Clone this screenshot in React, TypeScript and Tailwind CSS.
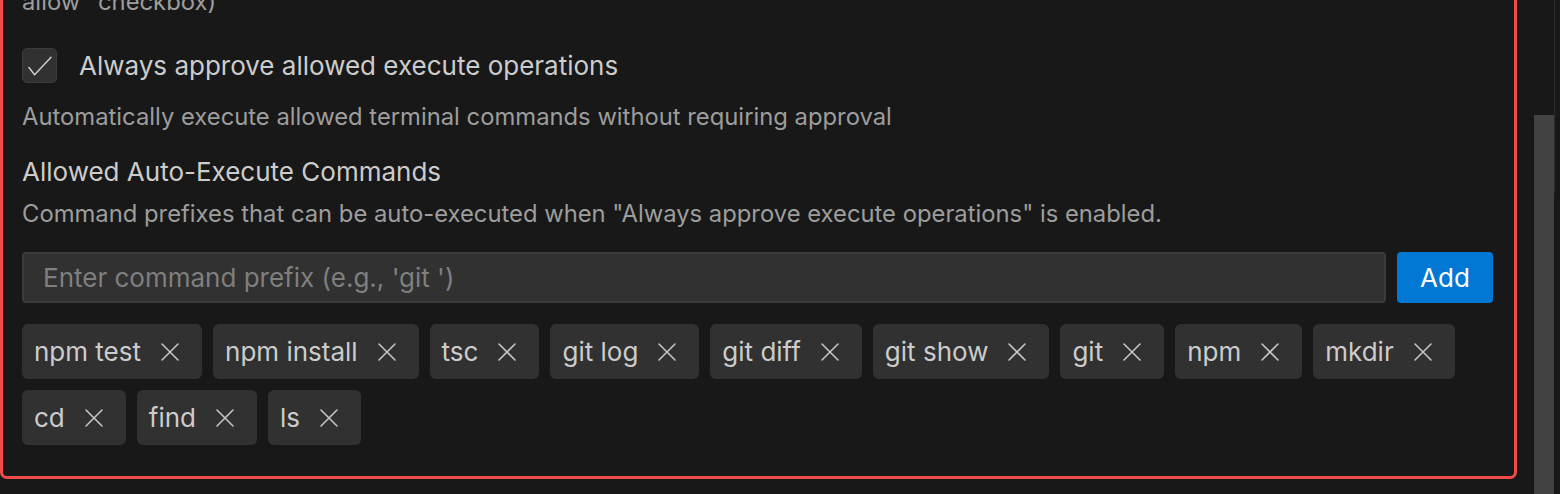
const commands = [
  "npm test",
  "npm install",
  "tsc",
  "git log",
  "git diff",
  "git show",
  "git",
  "npm",
  "mkdir",
  "cd",
  "find",
  "ls",
];

function CloseIcon() {
  return (
    <svg width="32" height="32" viewBox="0 0 32 32" fill="none" className="shrink-0">
      <path d="M8 8L24 24M24 8L8 24" stroke="#c5c5c5" strokeWidth="1.6" strokeLinecap="round" />
    </svg>
  );
}

function CheckIcon() {
  return (
    <svg width="35" height="35" viewBox="0 0 35 35" fill="none">
      <path d="M6.3 19.7L12.3 27.3L29.7 8.7" stroke="#cccccc" strokeWidth="1.6" strokeLinecap="round" strokeLinejoin="round" />
    </svg>
  );
}

export default function App() {
  return (
    <div
      className="h-[494px] w-[1560px] overflow-hidden bg-[#181818] flex text-[#cccccc]"
      style={{ fontFamily: "Inter, 'Noto Sans', sans-serif" }}
    >
      <div className="w-[1517px] shrink-0">
        <div className="-mt-[16px] border-[3px] border-[#f14c4c] rounded-b-[7px] pl-[19px] pr-[21px] pb-[31px]">
          {/* tail of previous setting's description */}
          <p className="text-[23.8px] leading-[30px] text-[#9d9d9d]">allow" checkbox)</p>

          {/* checkbox row */}
          <label className="mt-[31px] flex items-center gap-[22px]">
            <span className="w-[35px] h-[35px] rounded-[5px] bg-[#313131] border border-[#3c3c3c] flex items-center justify-center">
              <CheckIcon />
            </span>
            <span className="text-[26px] leading-[35px] text-[#cccccc]">
              Always approve allowed execute operations
            </span>
          </label>
          <p className="mt-[19px] text-[23.8px] leading-[30px] text-[#9d9d9d]">
            Automatically execute allowed terminal commands without requiring approval
          </p>

          {/* allowed commands */}
          <h3 className="mt-[24px] text-[26px] leading-[32px] text-[#cccccc]">
            Allowed Auto-Execute Commands
          </h3>
          <p className="mt-[11px] text-[23.8px] leading-[30px] text-[#9d9d9d]">
            Command prefixes that can be auto-executed when "Always approve execute operations" is enabled.
          </p>

          <div className="mt-[23px] flex gap-[11px]">
            <input
              className="flex-1 h-[51px] bg-[#313131] border-2 border-[#3c3c3c] rounded-[4px] px-[19px] text-[26px] text-[#cccccc] placeholder:text-[#7f7f7f] outline-none"
              placeholder="Enter command prefix (e.g., 'git ')"
            />
            <button className="w-[96px] h-[51px] bg-[#0078d4] rounded-[4px] text-white text-[26px]">
              Add
            </button>
          </div>

          <div className="mt-[21px] flex flex-wrap gap-x-[11px] gap-y-[11px] w-[1440px]">
            {commands.map((c) => (
              <div
                key={c}
                className="h-[55px] flex items-center bg-[#313131] rounded-[6px] pl-[12px] pr-[16px] text-[26px] text-[#cccccc]"
              >
                <span>{c}</span>
                <span className="ml-[13px]">
                  <CloseIcon />
                </span>
              </div>
            ))}
          </div>
        </div>
      </div>

      {/* scrollbar gutter */}
      <div className="w-[17px] shrink-0" />
      <div className="w-[20px] shrink-0 flex flex-col">
        <div className="h-[115px]" />
        <div className="flex-1 bg-[#424242]" />
      </div>
      <div className="flex-1 flex flex-col">
        <div className="h-[193px] border-l border-[#2b2b2b]" />
      </div>
    </div>
  );
}
